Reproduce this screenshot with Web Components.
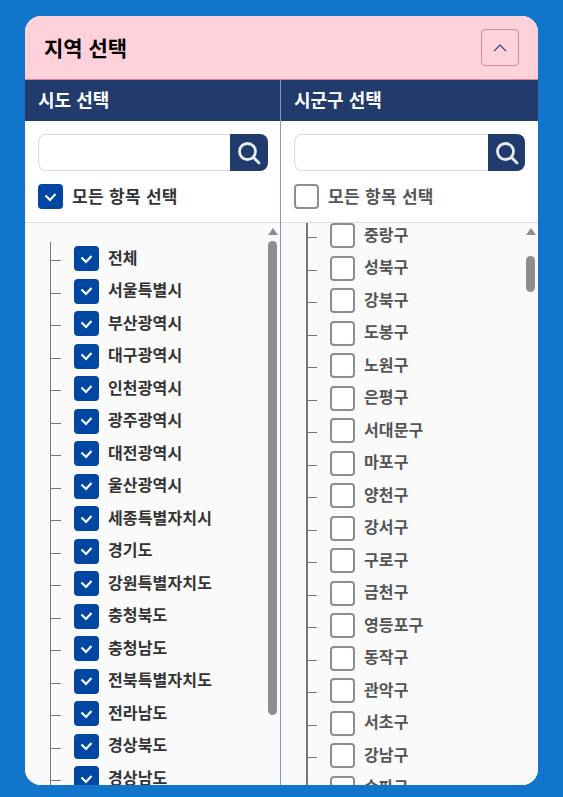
<!DOCTYPE html>
<html lang="ko">
<head>
<meta charset="utf-8">
<style>
    html, body { margin : 0; height : 100%; overflow : hidden; background : #1175cb; }
    body { padding : 16px 25px 12px; box-sizing : border-box; font-family : "Noto Sans CJK KR", "Noto Sans", sans-serif; }
</style>
</head>
<body>
<template id="check-box-tpl">
    <style>
        :host { display : flex; align-items : center; gap : 9px; height : 25px; font-size : var(--label-size, 16px); font-weight : 700; color : #333; white-space : nowrap; }
        .box { width : 25px; height : 25px; box-sizing : border-box; border-radius : 4px; border : 2px solid #8e8e8e; background : #fff; flex : none; display : flex; align-items : center; justify-content : center; }
        :host([checked]) .box { background : #0047a4; border-color : #0047a4; }
        svg { display : none; }
        :host([checked]) svg { display : block; }
        :host(:not([checked])) { color : #555; }
        .text { position : relative; top : var(--label-shift, -2px); letter-spacing : var(--label-spacing, .15px); }
    </style>
    <span class="box"><svg width="13" height="10" viewBox="0 0 13 10" fill="none" stroke="#fff" stroke-width="2.2"><path d="M1.5 3.5 6 8l5.5-6"/></svg></span>
    <span class="text"><slot></slot></span>
</template>

<template id="search-box-tpl">
    <style>
        :host { display : flex; height : 37px; }
        .field { flex : 1; min-width : 0; box-sizing : border-box; border : 1px solid #dcdcdc; border-right : 0; border-radius : 8px 0 0 8px; background : #fff; }
        .btn { width : var(--btn-width, 38px); background : #213b6d; border-radius : 0 8px 8px 0; display : flex; align-items : center; justify-content : center; }
    </style>
    <div class="field"></div>
    <div class="btn">
        <svg width="24" height="24" viewBox="0 0 24 24" fill="none" stroke="#e8ecf3" stroke-width="2.8"><circle cx="10.5" cy="10.5" r="8"/><path d="M16.6 16.6 22 22" stroke-linecap="round"/></svg>
    </div>
</template>

<template id="tree-list-tpl">
    <style>
        :host { display : flex; flex : 1; min-height : 0; background : #fafafa; }
        .rows { flex : 1; min-width : 0; overflow : hidden; position : relative; box-sizing : border-box; padding-left : var(--indent); padding-top : var(--top); }
        .line { position : absolute; top : var(--line-top); bottom : 0; left : var(--line-left); width : var(--line-width); background : #777; }
        .bar { width : 15px; flex : none; position : relative; background : #fafafa; }
        .up, .down { position : absolute; left : 3px; width : 0; height : 0; border-left : 5px solid transparent; border-right : 5px solid transparent; }
        .up { top : 5px; border-bottom : 7px solid #8e8e8e; }
        .down { bottom : 4px; border-top : 7px solid #8e8e8e; }
        .thumb { position : absolute; left : 3px; width : 9px; border-radius : 5px; background : #8e8e8e; }
        ::slotted(tree-row) { margin-bottom : 7.5px; }
    </style>
    <div class="rows"><div class="line"></div><slot></slot></div>
    <div class="bar"><span class="up"></span><span class="thumb"></span><span class="down"></span></div>
</template>

<template id="tree-row-tpl">
    <style>
        :host { display : flex; align-items : center; height : 25px; position : relative; }
        .tick { position : absolute; left : -24px; top : 14px; width : 11px; height : 1px; background : #777; }
    </style>
    <span class="tick"></span>
    <check-box><slot></slot></check-box>
</template>

<template id="picker-column-tpl">
    <style>
        :host { display : flex; flex-direction : column; min-width : 0; height : 100%; box-sizing : border-box; }
        .head { height : 41px; background : #213b6d; color : #fff; font-size : 18px; font-weight : 700; line-height : 38px; padding-left : 13px; }
        .tools { padding : 13px var(--tools-right, 13px) 13px 13px; display : flex; flex-direction : column; gap : 13px; background : #fff; border-bottom : 1px solid #dcdcdc; }
        check-box { --label-size : 17px; --label-spacing : .3px; --label-shift : -1px; }
    </style>
    <div class="head"><slot name="title"></slot></div>
    <div class="tools">
        <search-box></search-box>
        <check-box id="all">모든 항목 선택</check-box>
    </div>
    <slot></slot>
</template>

<template id="region-picker-tpl">
    <style>
        :host { display : flex; flex-direction : column; height : 769px; border-radius : 16px; overflow : hidden; background : #fff; }
        .top { height : 64px; box-sizing : border-box; background : #ffd1da; border-bottom : 1px solid #e9808f; display : flex; align-items : center; justify-content : space-between; padding : 0 19px; font-size : 21px; font-weight : 700; color : #000; }
        .name { position : relative; top : -1px; }
        .toggle { width : 38px; height : 37px; box-sizing : border-box; border : 1px solid #d58a9d; border-radius : 4px; display : flex; align-items : center; justify-content : center; }
        .cols { flex : 1; min-height : 0; display : grid; grid-template-columns : 256px 1fr; }
    </style>
    <div class="top">
        <span class="name"><slot name="title"></slot></span>
        <div class="toggle"><svg width="14" height="8" viewBox="0 0 14 8" fill="none" stroke="#213b6d" stroke-width="1.1"><path d="M1 7.2 7 1l6 6.2"/></svg></div>
    </div>
    <div class="cols"><slot></slot></div>
</template>

<region-picker>
    <span slot="title">지역 선택</span>
    <picker-column all-checked style="border-right : 1px solid #7f9bcb; --tools-right : 12px;">
        <span slot="title">시도 선택</span>
        <tree-list id="sido" data-indent="49" data-top="23" data-line-top="19" data-line-left="25" data-line-width="1" data-thumb-top="18" data-thumb-height="474"></tree-list>
    </picker-column>
    <picker-column style="--btn-width : 37px;">
        <span slot="title">시군구 선택</span>
        <tree-list id="sigungu" data-indent="49" data-top="0" data-line-top="0" data-line-left="25" data-line-width="2" data-thumb-top="33" data-thumb-height="36"></tree-list>
    </picker-column>
</region-picker>

<script type="module">
    function fromTemplate(el, id) {
        const root = el.attachShadow({mode : 'open'});
        root.appendChild(document.querySelector(id).content.cloneNode(true));
        return root;
    }

    class CheckBox extends HTMLElement {
        constructor() { super(); fromTemplate(this, '#check-box-tpl'); }
    }
    class SearchBox extends HTMLElement {
        constructor() { super(); fromTemplate(this, '#search-box-tpl'); }
    }
    class TreeRow extends HTMLElement {
        constructor() {
            super();
            this.shadow = fromTemplate(this, '#tree-row-tpl');
        }
        connectedCallback() {
            this.shadow.querySelector('check-box').toggleAttribute('checked', this.hasAttribute('checked'));
        }
    }
    class TreeList extends HTMLElement {
        constructor() {
            super();
            this.shadow = fromTemplate(this, '#tree-list-tpl');
        }
        connectedCallback() {
            const d = this.dataset;
            this.style.setProperty('--indent', d.indent + 'px');
            this.style.setProperty('--top', d.top + 'px');
            this.style.setProperty('--line-top', d.lineTop + 'px');
            this.style.setProperty('--line-left', d.lineLeft + 'px');
            this.style.setProperty('--line-width', d.lineWidth + 'px');
            const thumb = this.shadow.querySelector('.thumb');
            thumb.style.top = d.thumbTop + 'px';
            thumb.style.height = d.thumbHeight + 'px';
        }
    }
    class PickerColumn extends HTMLElement {
        constructor() {
            super();
            this.shadow = fromTemplate(this, '#picker-column-tpl');
        }
        connectedCallback() {
            this.shadow.querySelector('#all').toggleAttribute('checked', this.hasAttribute('all-checked'));
        }
    }
    class RegionPicker extends HTMLElement {
        constructor() { super(); fromTemplate(this, '#region-picker-tpl'); }
    }

    customElements.define('check-box', CheckBox);
    customElements.define('search-box', SearchBox);
    customElements.define('tree-row', TreeRow);
    customElements.define('tree-list', TreeList);
    customElements.define('picker-column', PickerColumn);
    customElements.define('region-picker', RegionPicker);

    const sido = ['전체', '서울특별시', '부산광역시', '대구광역시', '인천광역시', '광주광역시', '대전광역시', '울산광역시', '세종특별자치시', '경기도', '강원특별자치도', '충청북도', '충청남도', '전북특별자치도', '전라남도', '경상북도', '경상남도'];
    const sigungu = ['중랑구', '성북구', '강북구', '도봉구', '노원구', '은평구', '서대문구', '마포구', '양천구', '강서구', '구로구', '금천구', '영등포구', '동작구', '관악구', '서초구', '강남구', '송파구'];

    function fill(id, names, checked) {
        const list = document.getElementById(id);
        for (const name of names) {
            const row = document.createElement('tree-row');
            row.textContent = name;
            if (checked) row.setAttribute('checked', '');
            list.appendChild(row);
        }
    }
    fill('sido', sido, true);
    fill('sigungu', sigungu, false);
</script>
</body>
</html>
